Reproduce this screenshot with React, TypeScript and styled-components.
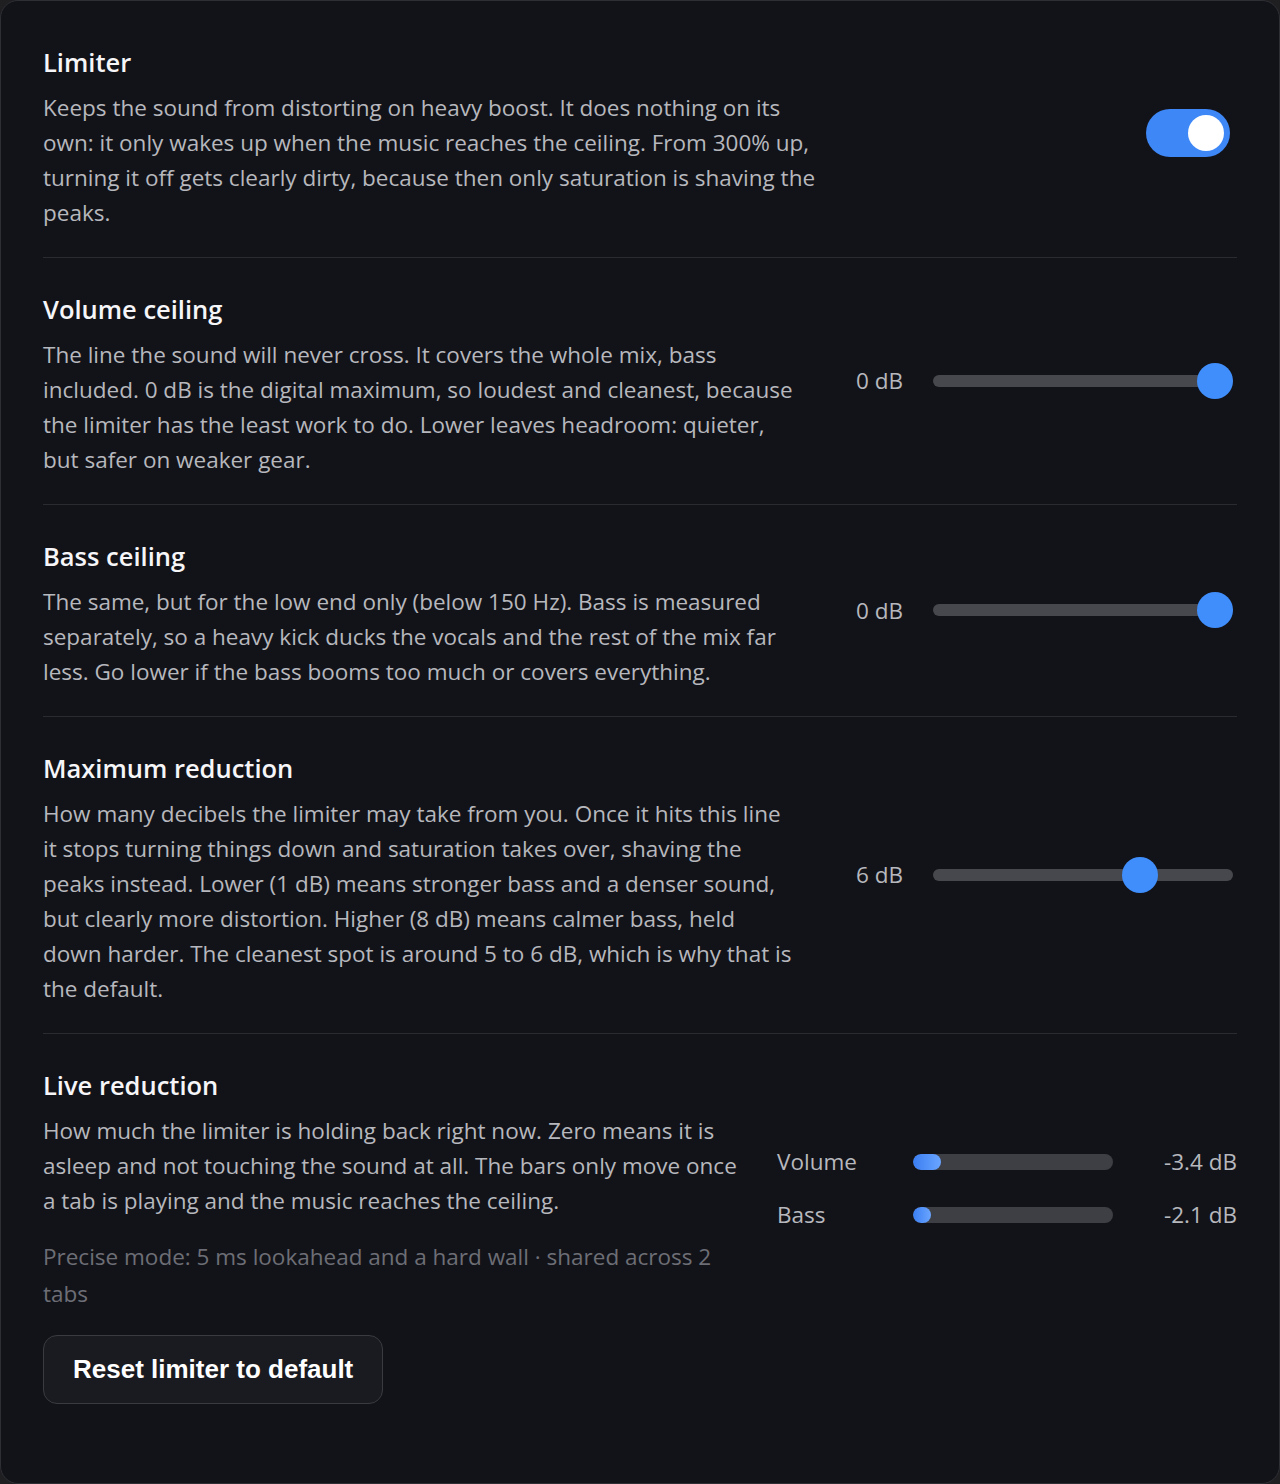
import React, { useState } from "react";
import styled, { createGlobalStyle } from "styled-components";

const GlobalStyle = createGlobalStyle`
  html, body {
    margin: 0;
    padding: 0;
    background: #1f1f22;
  }
  * {
    box-sizing: border-box;
  }
`;

const Panel = styled.div`
  min-height: 1484px;
  padding: 10px 42px 40px;
  background: #121319;
  border: 1px solid #2e2f34;
  border-radius: 18px;
  font-family: "Open Sans", "Noto Sans", sans-serif;
  color: #b7b8bd;
`;

const Section = styled.section<{ $gap?: number }>`
  display: grid;
  grid-template-columns: minmax(0, 1fr) auto;
  column-gap: ${(p) => p.$gap ?? 60}px;
  align-items: center;
  padding: 36px 0 27px;
  border-bottom: 1px solid #2a2b31;

  &:last-child {
    border-bottom: none;
  }
`;

const TextCol = styled.div`
  display: flex;
  flex-direction: column;
`;

const Title = styled.h3`
  margin: 0 0 13px;
  font-size: 25.5px;
  line-height: 30px;
  font-weight: 600;
  color: #f6f6f8;
`;

const Desc = styled.p`
  margin: 0;
  max-width: 792px;
  font-size: 22.5px;
  line-height: 35px;
  color: #b7b8bd;
`;

const Note = styled.p`
  margin: 20px 0 0;
  font-size: 22.5px;
  line-height: 37px;
  color: #6d6e75;
`;

const ToggleTrack = styled.button<{ $on: boolean }>`
  width: 84px;
  height: 48px;
  margin: 0 7px 12px 0;
  padding: 0 6px;
  border: none;
  border-radius: 24px;
  background: ${(p) => (p.$on ? "#3d87f7" : "#3a3b41")};
  display: flex;
  align-items: center;
  justify-content: ${(p) => (p.$on ? "flex-end" : "flex-start")};
  cursor: pointer;
`;

const ToggleKnob = styled.span`
  width: 36px;
  height: 36px;
  border-radius: 50%;
  background: #ffffff;
`;

const SliderControl = styled.div`
  display: flex;
  align-items: center;
  padding-right: 4px;
  margin-bottom: 10px;
`;

const SliderValue = styled.span`
  width: 77px;
  font-size: 22.5px;
  color: #b7b8bd;
`;

const SliderTrack = styled.div`
  position: relative;
  width: 300px;
  height: 12px;
  border-radius: 6px;
  background: #47484d;
`;

const SliderThumb = styled.span`
  position: absolute;
  top: 50%;
  width: 36px;
  height: 36px;
  margin-left: -18px;
  margin-top: -18px;
  border-radius: 50%;
  background: #3f8efc;
`;

const Meters = styled.div`
  display: grid;
  grid-template-columns: 136px 200px 124px;
  row-gap: 29px;
  align-items: center;
  margin-bottom: 6px;
`;

const MeterLabel = styled.span`
  font-size: 22.5px;
  line-height: 24px;
  color: #b7b8bd;
`;

const MeterBar = styled.div`
  height: 16px;
  border-radius: 8px;
  background: #3e3f45;
  overflow: hidden;
`;

const MeterFill = styled.div`
  height: 100%;
  min-width: 16px;
  border-radius: 8px;
  background: linear-gradient(90deg, #3a7ef2, #6aa5ff);
`;

const MeterValue = styled.span`
  font-size: 22.5px;
  line-height: 24px;
  text-align: right;
  color: #b7b8bd;
`;

const ResetButton = styled.button`
  grid-column: 1 / -1;
  justify-self: start;
  margin-top: 23px;
  height: 69px;
  padding: 0 29px;
  border: 1.5px solid #3a3b41;
  border-radius: 14px;
  background: #1a1b20;
  color: #ffffff;
  font-family: "Liberation Sans", Arial, sans-serif;
  font-size: 26px;
  font-weight: 700;
  cursor: pointer;
`;

type SliderProps = { value: number; min: number; max: number; unit: string };

function Slider({ value, min, max, unit }: SliderProps) {
  const frac = (value - min) / (max - min);
  return (
    <SliderControl>
      <SliderValue>
        {value} {unit}
      </SliderValue>
      <SliderTrack>
        <SliderThumb style={{ left: `calc(18px + ${frac} * (100% - 36px))` }} />
      </SliderTrack>
    </SliderControl>
  );
}

const meters = [
  { label: "Volume", value: -3.4 },
  { label: "Bass", value: -2.1 },
];

export default function App() {
  const [enabled, setEnabled] = useState(true);

  return (
    <>
      <GlobalStyle />
      <Panel>
        <Section>
          <TextCol>
            <Title>Limiter</Title>
            <Desc>
              Keeps the sound from distorting on heavy boost. It does nothing on its own: it only
              wakes up when the music reaches the ceiling. From 300% up, turning it off gets
              clearly dirty, because then only saturation is shaving the peaks.
            </Desc>
          </TextCol>
          <ToggleTrack $on={enabled} onClick={() => setEnabled(!enabled)}>
            <ToggleKnob />
          </ToggleTrack>
        </Section>

        <Section>
          <TextCol>
            <Title>Volume ceiling</Title>
            <Desc>
              The line the sound will never cross. It covers the whole mix, bass included. 0 dB is
              the digital maximum, so loudest and cleanest, because the limiter has the least work
              to do. Lower leaves headroom: quieter, but safer on weaker gear.
            </Desc>
          </TextCol>
          <Slider value={0} min={-12} max={0} unit="dB" />
        </Section>

        <Section>
          <TextCol>
            <Title>Bass ceiling</Title>
            <Desc>
              The same, but for the low end only (below 150 Hz). Bass is measured separately, so a
              heavy kick ducks the vocals and the rest of the mix far less. Go lower if the bass
              booms too much or covers everything.
            </Desc>
          </TextCol>
          <Slider value={0} min={-12} max={0} unit="dB" />
        </Section>

        <Section>
          <TextCol>
            <Title>Maximum reduction</Title>
            <Desc>
              How many decibels the limiter may take from you. Once it hits this line it stops
              turning things down and saturation takes over, shaving the peaks instead. Lower (1
              dB) means stronger bass and a denser sound, but clearly more distortion. Higher (8
              dB) means calmer bass, held down harder. The cleanest spot is around 5 to 6 dB, which
              is why that is the default.
            </Desc>
          </TextCol>
          <Slider value={6} min={1} max={8} unit="dB" />
        </Section>

        <Section $gap={28}>
          <TextCol>
            <Title>Live reduction</Title>
            <Desc>
              How much the limiter is holding back right now. Zero means it is asleep and not
              touching the sound at all. The bars only move once a tab is playing and the music
              reaches the ceiling.
            </Desc>
            <Note>Precise mode: 5 ms lookahead and a hard wall · shared across 2 tabs</Note>
          </TextCol>
          <Meters>
            {meters.map((m) => (
              <React.Fragment key={m.label}>
                <MeterLabel>{m.label}</MeterLabel>
                <MeterBar>
                  <MeterFill style={{ width: `${(Math.abs(m.value) / 24) * 100}%` }} />
                </MeterBar>
                <MeterValue>{m.value.toFixed(1)} dB</MeterValue>
              </React.Fragment>
            ))}
          </Meters>
          <ResetButton>Reset limiter to default</ResetButton>
        </Section>
      </Panel>
    </>
  );
}
